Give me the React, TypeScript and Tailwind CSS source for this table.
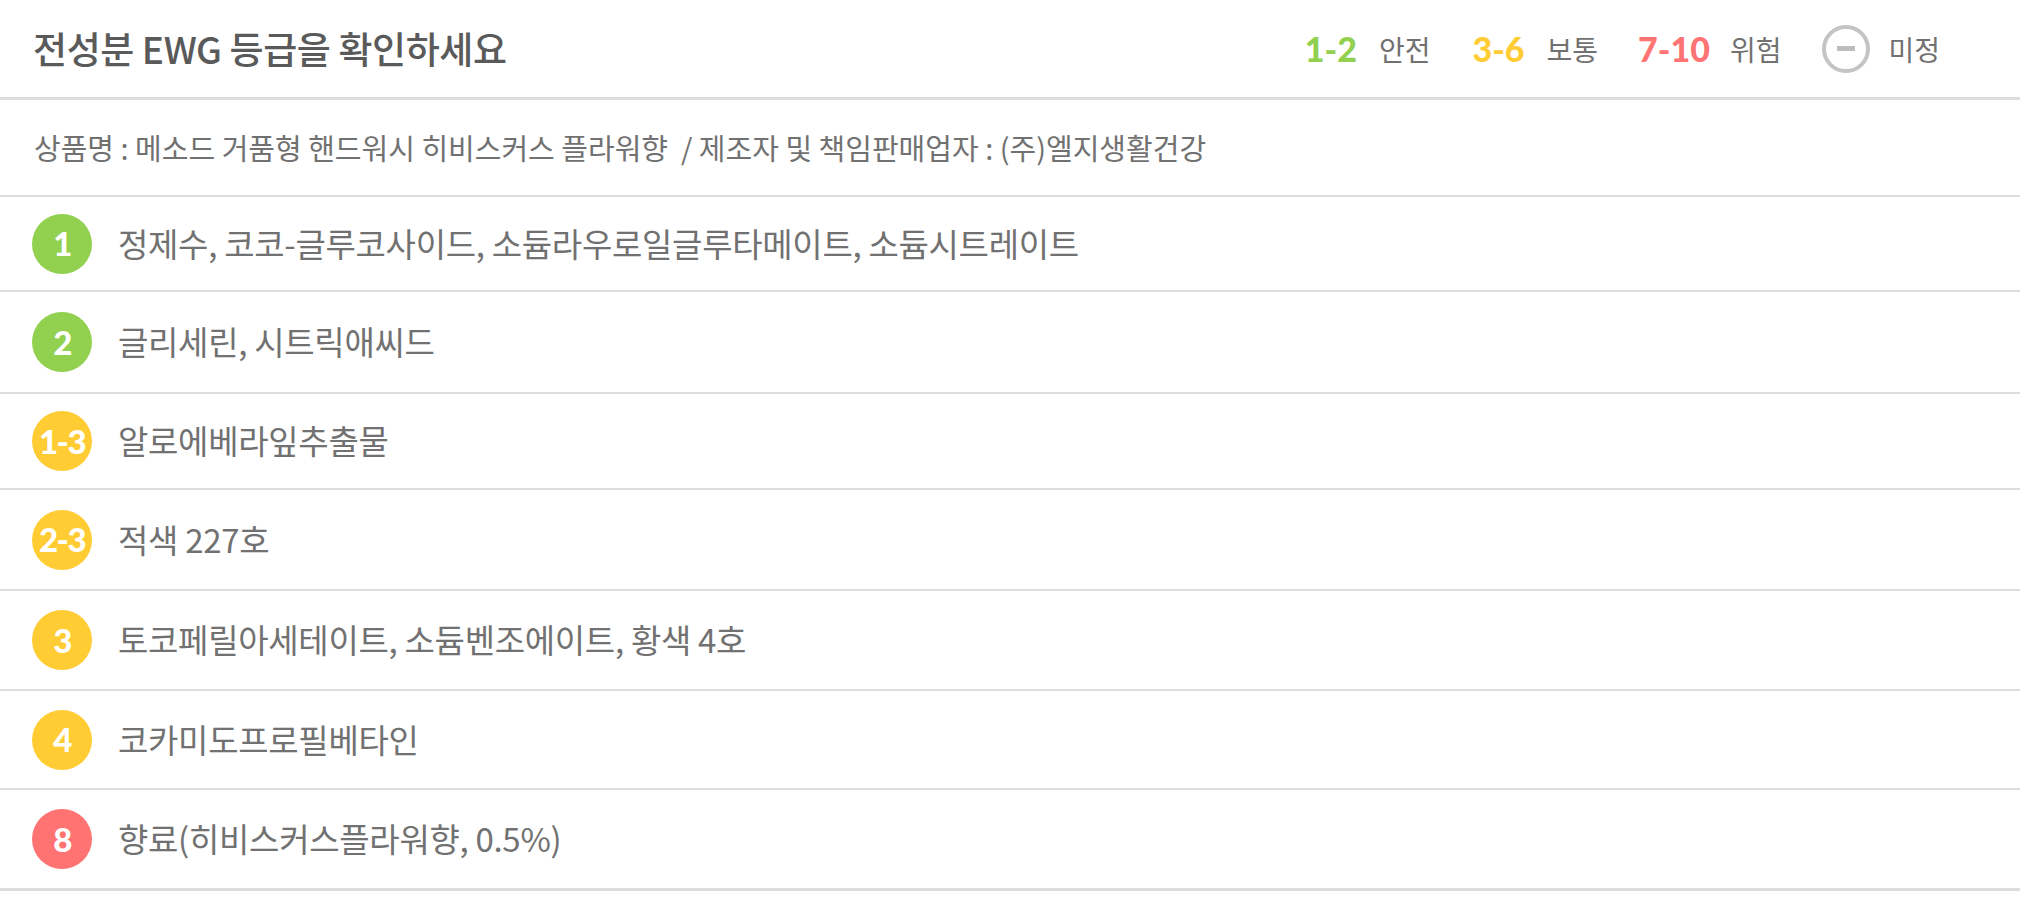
import React from "react";

const rows = [
  { grade: "1", color: "bg-[#92d050]", h: "h-[95px]", text: "정제수, 코코-글루코사이드, 소듐라우로일글루타메이트, 소듐시트레이트" },
  { grade: "2", color: "bg-[#92d050]", h: "h-[102px]", text: "글리세린, 시트릭애씨드" },
  { grade: "1-3", color: "bg-[#ffcc33]", h: "h-[96px]", text: "알로에베라잎추출물" },
  { grade: "2-3", color: "bg-[#ffcc33]", h: "h-[101px]", text: "적색 227호" },
  { grade: "3", color: "bg-[#ffcc33]", h: "h-[100px]", text: "토코페릴아세테이트, 소듐벤조에이트, 황색 4호" },
  { grade: "4", color: "bg-[#ffcc33]", h: "h-[99px]", text: "코카미도프로필베타인" },
  { grade: "8", color: "bg-[#ff7373]", h: "h-[101px]", text: "향료(히비스커스플라워향, 0.5%)" },
];

export default function App() {
  return (
    <div className="w-[2020px] h-[897px] bg-white text-[#717171] font-['Noto_Sans_CJK_KR','Noto_Sans',sans-serif]">
      <header className="h-[100px] flex items-center justify-between pl-[33px] pr-[80px] border-b-[3px] border-[#dddddd]">
        <h1 className="text-[37px] font-medium text-[#5a5a5a] tracking-[-0.4px]">전성분 EWG 등급을 확인하세요</h1>

        <div className="flex items-center">
          <span className="text-[34px] font-black text-[#92d050] font-[Lato,sans-serif]">1-2</span>
          <span className="ml-[22px] text-[28px]">안전</span>
          <span className="ml-[42px] text-[34px] font-black text-[#ffcc33] font-[Lato,sans-serif]">3-6</span>
          <span className="ml-[22px] text-[28px]">보통</span>
          <span className="ml-[40px] text-[34px] font-black text-[#ff7373] font-[Lato,sans-serif]">7-10</span>
          <span className="ml-[20px] text-[28px]">위험</span>
          <div className="ml-[41px] w-[48px] h-[48px] rounded-full border-[4px] border-[#c4c4c4] flex items-center justify-center">
            <div className="w-[18px] h-[5px] bg-[#bdbdbd]" />
          </div>
          <span className="ml-[18px] text-[28px]">미정</span>
        </div>
      </header>

      <div className="h-[97px] flex items-center pl-[34px] border-b-2 border-[#dddddd]">
        <p className="text-[29px]">
          상품명 : 메소드 거품형 핸드워시 히비스커스 플라워향&nbsp; / 제조자 및 책임판매업자 : (주)엘지생활건강
        </p>
      </div>

      {rows.map((row, i) => (
        <div
          key={i}
          className={`${row.h} flex items-center pl-[32px] ${i === rows.length - 1 ? "border-b-[3px]" : "border-b-2"} border-[#dddddd]`}
        >
          <div className={`w-[60px] h-[60px] rounded-full ${row.color} flex items-center justify-center shrink-0`}>
            <span className="text-white text-[33px] font-black tracking-[-1.5px] leading-none font-[Lato,sans-serif]">
              {row.grade}
            </span>
          </div>
          <p className="ml-[26px] text-[33px] tracking-[-0.3px]">{row.text}</p>
        </div>
      ))}
    </div>
  );
}
